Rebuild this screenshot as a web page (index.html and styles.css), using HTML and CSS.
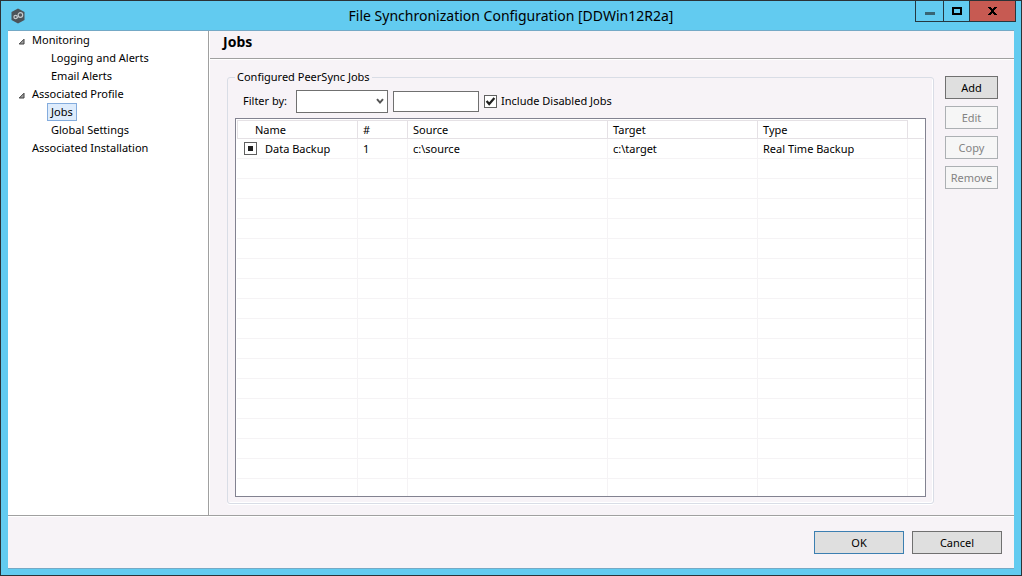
FILE: index.html
```html
<!DOCTYPE html>
<html lang="en">
<head>
<meta charset="utf-8">
<title>File Synchronization Configuration</title>
<link rel="stylesheet" href="styles.css">
</head>
<body>
<div class="window">
  <header class="titlebar">
    <svg class="app-icon" width="14" height="16" viewBox="0 0 14 16" aria-hidden="true">
      <path d="M7 0.5 L13.5 4 V12 L7 15.5 L0.5 12 V4 Z" fill="#4c5459"/>
      <circle cx="4.6" cy="9" r="1.7" fill="none" stroke="#c3c9cc" stroke-width="1.2"/>
      <circle cx="9.4" cy="7" r="2.3" fill="none" stroke="#c3c9cc" stroke-width="1.2"/>
      <path d="M6 9.8 L7.8 8.4" stroke="#c3c9cc" stroke-width="1"/>
    </svg>
    <h1 class="title">File Synchronization Configuration [DDWin12R2a]</h1>
    <div class="controls">
      <button type="button" class="control control-min" aria-label="Minimize">
        <svg width="10" height="3" viewBox="0 0 10 3"><path d="M0 0h10v3H0z" fill="#386574"/></svg>
      </button>
      <button type="button" class="control control-max" aria-label="Maximize">
        <svg width="10" height="8" viewBox="0 0 10 8"><path d="M1 1h8v6H1z" fill="none" stroke="#000" stroke-width="2"/></svg>
      </button>
      <button type="button" class="control control-close" aria-label="Close">
        <svg width="9" height="8" viewBox="0 0 9 8" shape-rendering="crispEdges"><path d="M0 0h3v1h1v1h1V1h1V0h3v1H8v1H7v1H6v2h1v1h1v1h1v1H6V7H5V6H4v1H3v1H0V7h1V6h1V5h1V3H2V2H1V1H0z"/></svg>
      </button>
    </div>
  </header>

  <div class="client">
    <div class="body">
      <nav class="tree" aria-label="Settings">
        <ul class="tree-list">
          <li>
            <a class="node" href="#"><svg class="arrow" width="7" height="7" viewBox="0 0 7 7"><path d="M6 1.2 V6 H1.2 Z" fill="#a0a0a0" stroke="#404040"/></svg>Monitoring</a>
            <ul class="tree-list">
              <li><a class="node leaf" href="#">Logging and Alerts</a></li>
              <li><a class="node leaf" href="#">Email Alerts</a></li>
            </ul>
          </li>
          <li>
            <a class="node" href="#"><svg class="arrow" width="7" height="7" viewBox="0 0 7 7"><path d="M6 1.2 V6 H1.2 Z" fill="#a0a0a0" stroke="#404040"/></svg>Associated Profile</a>
            <ul class="tree-list">
              <li><a class="node leaf selected" href="#" aria-current="page">Jobs</a></li>
              <li><a class="node leaf" href="#">Global Settings</a></li>
            </ul>
          </li>
          <li><a class="node no-arrow" href="#">Associated Installation</a></li>
        </ul>
      </nav>

      <main class="page">
        <h2 class="page-title">Jobs</h2>
        <div class="page-body">
          <fieldset class="group">
            <legend class="legend">Configured PeerSync Jobs</legend>
            <div class="group-body">
              <div class="filter">
                <label class="filter-label" for="field">Filter by:</label>
                <span class="select-wrap">
                  <select class="select" id="field"><option></option></select>
                  <svg class="chevron" width="8" height="7" viewBox="0 0 8 7"><path d="M1 1.2 L4 4.6 L7 1.2" fill="none" stroke="#555" stroke-width="2"/></svg>
                </span>
                <input class="textbox" type="text" aria-label="Filter value">
                <label class="check-label" for="disabled">
                  <span class="check-wrap">
                    <input class="check" type="checkbox" id="disabled" checked>
                    <svg class="tick" width="13" height="13" viewBox="0 0 13 13"><path d="M2.6 6 L5.2 9 L10.4 3" fill="none" stroke="#202020" stroke-width="2.2"/></svg>
                  </span>
                  Include Disabled Jobs
                </label>
              </div>
              <div class="grid">
                <table class="jobs">
                  <colgroup><col class="c-name"><col class="c-num"><col class="c-source"><col class="c-target"><col class="c-type"><col></colgroup>
                  <thead>
                    <tr><th class="name-head">Name</th><th>#</th><th>Source</th><th>Target</th><th>Type</th><td></td></tr>
                  </thead>
                  <tbody>
                    <tr>
                      <td class="name-cell"><label class="job" for="job1"><span class="check-wrap"><input class="check" type="checkbox" id="job1"><svg class="tick" width="13" height="13" viewBox="0 0 13 13"><path d="M4 4h5v5H4z" fill="#202020"/></svg></span>Data Backup</label></td>
                      <td>1</td><td>c:\source</td><td>c:\target</td><td>Real Time Backup</td><td></td>
                    </tr>
                    <tr><td></td><td></td><td></td><td></td><td></td><td></td></tr>
                    <tr><td></td><td></td><td></td><td></td><td></td><td></td></tr>
                    <tr><td></td><td></td><td></td><td></td><td></td><td></td></tr>
                    <tr><td></td><td></td><td></td><td></td><td></td><td></td></tr>
                    <tr><td></td><td></td><td></td><td></td><td></td><td></td></tr>
                    <tr><td></td><td></td><td></td><td></td><td></td><td></td></tr>
                    <tr><td></td><td></td><td></td><td></td><td></td><td></td></tr>
                    <tr><td></td><td></td><td></td><td></td><td></td><td></td></tr>
                    <tr><td></td><td></td><td></td><td></td><td></td><td></td></tr>
                    <tr><td></td><td></td><td></td><td></td><td></td><td></td></tr>
                    <tr><td></td><td></td><td></td><td></td><td></td><td></td></tr>
                    <tr><td></td><td></td><td></td><td></td><td></td><td></td></tr>
                    <tr><td></td><td></td><td></td><td></td><td></td><td></td></tr>
                    <tr><td></td><td></td><td></td><td></td><td></td><td></td></tr>
                    <tr><td></td><td></td><td></td><td></td><td></td><td></td></tr>
                    <tr><td></td><td></td><td></td><td></td><td></td><td></td></tr>
                    <tr><td></td><td></td><td></td><td></td><td></td><td></td></tr>
                  </tbody>
                </table>
              </div>
            </div>
          </fieldset>
          <div class="actions">
            <button type="button" class="btn">Add</button>
            <button type="button" class="btn" disabled>Edit</button>
            <button type="button" class="btn" disabled>Copy</button>
            <button type="button" class="btn" disabled>Remove</button>
          </div>
        </div>
      </main>
    </div>
    <footer class="footer">
      <button type="button" class="btn btn-wide btn-default">OK</button>
      <button type="button" class="btn btn-wide">Cancel</button>
    </footer>
  </div>
</div>
</body>
</html>
```
FILE: styles.css
```css
* { box-sizing: border-box; }

body {
  margin: 0;
  font: 11px/18px "Noto Sans", "Open Sans", sans-serif;
  color: #000;
}

button, input, select { font: inherit; color: inherit; }

.window {
  height: 100vh;
  display: flex;
  flex-direction: column;
  padding: 0 7px 6px;
  background: #62cbf0;
  border: 1px solid #2b3236;
}

.titlebar {
  flex: none;
  height: 29px;
  display: grid;
  grid-template-columns: 100px 1fr 100px;
  align-items: center;
}
.app-icon { margin-left: 3px; }
.title {
  margin: 0;
  font-size: 14px;
  font-weight: 400;
  line-height: 20px;
  text-align: center;
  white-space: nowrap;
}
.controls {
  display: flex;
  align-self: start;
  justify-self: end;
  margin-right: -2px;
  height: 21px;
  border: 1px solid #25373f;
  border-top: 0;
}
.control {
  display: grid;
  place-items: center;
  padding: 0;
  border: 0;
  background: #62cbf0;
}
.control-min { width: 27px; padding-top: 5px; }
.control-max { width: 26px; border-left: 1px solid #25373f; }
.control-close { width: 46px; border-left: 1px solid #25373f; background: #c75a52; }

.client {
  flex: 1;
  min-height: 0;
  display: flex;
  flex-direction: column;
  background: #f7f3f7;
  border-top: 1px solid #74a9c6;
  border-bottom: 1px solid #74a9c6;
}
.body {
  flex: 1;
  min-height: 0;
  display: flex;
}

.tree {
  width: 201px;
  flex: none;
  background: #fff;
  border-right: 1px solid #a0a0a0;
}
.tree-list { margin: 0; padding: 0; list-style: none; }
.tree-list .tree-list { padding-left: 39px; }
.node {
  display: flex;
  align-items: center;
  height: 18px;
  gap: 7px;
  padding-left: 10px;
  color: inherit;
  text-decoration: none;
}
.arrow { margin-top: 2px; }
.no-arrow { padding-left: 24px; }
.leaf {
  width: max-content;
  padding: 0 3px;
  border: 1px solid transparent;
}
.selected { background: #deecfc; border-color: #84acdd; }

.page {
  flex: 1;
  min-width: 0;
  display: flex;
  flex-direction: column;
  border-left: 1px solid #fff;
}
.page-title {
  margin: 0;
  height: 28px;
  padding: 1px 13px;
  font-size: 14px;
  font-weight: 700;
  line-height: 20px;
  border-bottom: 1px solid #a0a0a0;
  box-shadow: 0 1px #fff;
}
.page-body {
  flex: 1;
  min-height: 0;
  display: flex;
  gap: 11px;
  padding: 9px 16px 11px 17px;
}

.group {
  flex: 1;
  min-width: 0;
  margin: 0;
  padding: 0 7px 6px;
  border: 1px solid #d9dde6;
  border-radius: 3px;
  box-shadow: inset -1px -1px #fff, 0 1px #fff;
}
.legend { margin-left: 0; padding: 0 2px; line-height: 18px; }
.group-body { height: 100%; display: flex; flex-direction: column; }

.filter {
  display: flex;
  align-items: center;
  height: 32px;
  gap: 5px;
  padding: 0 0 2px 8px;
}
.filter-label { width: 48px; white-space: nowrap; }
.select-wrap, .check-wrap { display: grid; }
.select-wrap > *, .check-wrap > * { grid-area: 1 / 1; }
.select {
  appearance: none;
  width: 92px;
  height: 23px;
  margin: 0;
  border: 1px solid #707070;
  border-radius: 0;
  background: #fff;
}
.chevron { place-self: center end; margin-right: 4px; pointer-events: none; }
.textbox { width: 86px; height: 21px; border: 1px solid #707070; background: #fff; }
.check-label { display: flex; align-items: center; gap: 4px; white-space: nowrap; }
.check {
  appearance: none;
  width: 13px;
  height: 13px;
  margin: 0;
  border: 1px solid #606060;
  background: #fff;
}
.tick { pointer-events: none; }

.grid {
  flex: 1;
  min-height: 0;
  overflow: hidden;
  padding: 1px;
  background: #fff;
  border: 1px solid #828290;
}
.jobs {
  width: 100%;
  table-layout: fixed;
  border-collapse: separate;
  border-spacing: 0;
}
.c-name { width: 121px; }
.c-num { width: 50px; }
.c-source { width: 200px; }
.c-target, .c-type { width: 150px; }
.jobs th, .jobs td {
  height: 20px;
  padding: 0 5px;
  font-weight: 400;
  line-height: 18px;
  text-align: left;
  white-space: nowrap;
  border-right: 1px solid #f5f3f5;
  border-bottom: 1px solid #f5f3f5;
}
.jobs thead th, .jobs thead td { height: 19px; border-color: #e5e1e5; }
.jobs thead th { border-top: 1px solid #e5e1e5; line-height: 17px; }
.jobs tr > :last-child { border-right: 0; }
.jobs .name-head { padding-left: 17px; border-left: 1px solid #e5e1e5; }
.jobs .name-cell { padding-left: 7px; }
.job { display: flex; align-items: center; gap: 8px; }

.actions { display: flex; flex-direction: column; gap: 7px; padding-top: 8px; }
.btn {
  width: 53px;
  height: 23px;
  padding: 0;
  line-height: 18px;
  text-align: center;
  background: #dfdfdf;
  border: 1px solid #707070;
  border-radius: 0;
}
.btn:disabled { color: #838383; background: #f6f6f6; border-color: #acb0b3; }
.btn-wide { width: 90px; }
.btn-default { border-color: #3c7fb1; }

.footer {
  flex: none;
  display: flex;
  justify-content: flex-end;
  gap: 8px;
  padding: 15px 12px 14px;
  border-top: 1px solid #a0a0a0;
  box-shadow: inset 0 1px #fff;
}
```
